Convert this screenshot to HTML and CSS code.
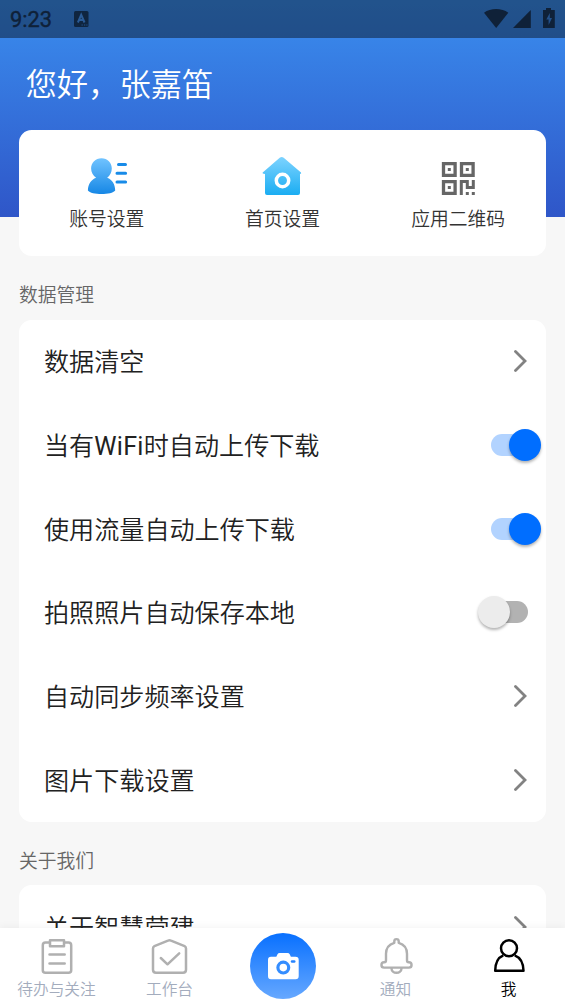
FILE: index.html
```html
<!DOCTYPE html>
<html lang="zh-CN">
<head>
<meta charset="utf-8">
<title>我</title>
<link rel="stylesheet" href="styles.css">
</head>
<body>
<div class="app">
  <header class="statusbar">
    <span class="clock">9:23</span>
    <svg class="ime" width="15" height="16" viewBox="0 0 15 16"><rect width="14.5" height="16" rx="1.5" fill="#0f2540"/><path d="M3.9 11.5 7.2 3.8 10.5 11.5M5 9h4.400" fill="none" stroke="#2a5b96" stroke-width="2"/><path d="M7.500 14h1.300M10 14h1.300M12.300 14h1.200" stroke="#23548d" stroke-width="1.200"/></svg>
    <svg class="signals" width="72" height="20" viewBox="484 8 72 20" fill="#0f2138"><path d="M484 12.700C490.500 7.800 501.800 7.800 508.300 12.700L496.200 28Z"/><path d="M513 28 530.800 10V28Z"/><path d="M546 8h5v2h3.800v18H543V10h3Z"/><path d="M549.800 13 546.300 19.500h2.300V25l3.400-7h-2.200Z" fill="#23518a"/></svg>
  </header>
  <main class="content">
    <section class="hero">
      <h1 class="greeting">您好，张嘉笛</h1>
    </section>
    <nav class="card shortcuts">
      <a class="shortcut">
        <svg width="42" height="42" viewBox="86 155 42 42"><defs><linearGradient id="person" x1="0" y1="0" x2="0" y2="1"><stop offset="0" stop-color="#70c3ff"/><stop offset="1" stop-color="#1687e5"/></linearGradient></defs><path d="M101.500 158.300c6 0 10.300 4.500 10.300 10.300 0 4-1.900 7-4.600 9.200 5.100 2 8 6.500 8 12.700-3.300 4.800-24 4.800-27.300 0 0-6.200 3.200-10.700 8.200-12.700-3-2.200-5-5.200-5-9.200 0-5.800 4.400-10.300 10.400-10.300Z" fill="url(#person)"/><path d="M118.500 164.500h7M117 173.200h8.600M117 181.900h8.600" stroke="#188be8" stroke-width="3" stroke-linecap="round"/></svg>
        <span>账号设置</span>
      </a>
      <a class="shortcut">
        <svg width="42" height="42" viewBox="262 155 42 42"><defs><linearGradient id="house" x1="0" y1="0" x2="0" y2="1"><stop offset="0" stop-color="#7dd3ff"/><stop offset="1" stop-color="#1badf2"/></linearGradient></defs><path d="M280.700 157.800q2-1.800 4 0L302 172.400q.8 1.400-1 1.500v19q0 2-2 2h-31q-2 0-2-2v-19q-3-.2-2.300-1.500Z" fill="url(#house)"/><circle cx="283.500" cy="180.500" r="6.200" fill="none" stroke="#fff" stroke-width="3.500"/></svg>
        <span>首页设置</span>
      </a>
      <a class="shortcut">
        <svg width="42" height="42" viewBox="437.200 155 42 42"><path d="M443.700 163.700h11.600v11.600h-11.600ZM461.700 163.700h11.600v11.600h-11.600ZM443.700 181.700h11.600v11.600h-11.600Z" fill="none" stroke="#666" stroke-width="3.300"/><path d="M448 168h3v3h-3ZM466 168h3v3h-3ZM448 186h3v3h-3ZM460 180h9v6h3v-6h3v9h-9v-6h-3v12h-3ZM466 192h3v3h-3ZM472 192h3v3h-3Z" fill="#666"/></svg>
        <span>应用二维码</span>
      </a>
    </nav>
    <h2 class="section-title">数据管理</h2>
    <section class="card settings">
      <div class="row"><span>数据清空</span><svg class="chevron" viewBox="0 0 13 22"><path d="M1.500 1.500 11 11 1.500 20.500"/></svg></div>
      <div class="row"><span>当有<b class="latin">WiFi</b>时自动上传下载</span><i class="switch on"></i></div>
      <div class="row"><span>使用流量自动上传下载</span><i class="switch on"></i></div>
      <div class="row"><span>拍照照片自动保存本地</span><i class="switch"></i></div>
      <div class="row"><span>自动同步频率设置</span><svg class="chevron" viewBox="0 0 13 22"><path d="M1.500 1.500 11 11 1.500 20.500"/></svg></div>
      <div class="row"><span>图片下载设置</span><svg class="chevron" viewBox="0 0 13 22"><path d="M1.500 1.500 11 11 1.500 20.500"/></svg></div>
    </section>
    <h2 class="section-title">关于我们</h2>
    <section class="card settings">
      <div class="row"><span>关于智慧营建</span><svg class="chevron" viewBox="0 0 13 22"><path d="M1.500 1.500 11 11 1.500 20.500"/></svg></div>
    </section>
  </main>
  <nav class="tabbar">
    <a class="tab">
      <svg width="38" height="38" viewBox="37.500 937 38 38" fill="none" stroke="#b0b0b0" stroke-width="2.500" stroke-linecap="round" stroke-linejoin="round"><path d="M49.500 942.500H45q-2.700 0-2.700 2.700v25q0 2.500 2.700 2.500h23q2.700 0 2.700-2.500v-25q0-2.700-2.700-2.700h-4.500M49.500 940.300h14v6h-14ZM49 954.500h15.200M49 963.500h15.200"/></svg>
      <span>待办与关注</span>
    </a>
    <a class="tab">
      <svg width="38" height="38" viewBox="151 937 38 38" fill="none" stroke="#b0b0b0" stroke-width="2.500" stroke-linecap="round" stroke-linejoin="round"><path d="M168 940.600q1.500-.8 3 0l13.600 5.500q1.400.7 1.400 2.400v21.200q0 3-3 3h-27q-3 0-3-3v-21.200q0-1.700 1.400-2.400ZM160.800 958l6.700 6.300 11.700-11"/></svg>
      <span>工作台</span>
    </a>
    <a class="tab tab-camera">
      <span class="camera"><svg width="32" height="28" viewBox="266 952 32 28"><path d="M270 956.800h5.300l1.200-2.500q.7-1.300 2.200-1.300h7.800q1.500 0 2.200 1.300l1.200 2.500h4.600q3.200 0 3.200 3.200v16q0 3.200-3.200 3.200H270q-3 0-3-3.200v-16q0-3.200 3-3.200Z" fill="#fff"/><circle cx="282.300" cy="967.600" r="5.400" fill="none" stroke="#348dff" stroke-width="3.200"/><path d="M291 961.500h2.300" stroke="#2683ff" stroke-width="2.400" stroke-linecap="round"/></svg></span>
    </a>
    <a class="tab">
      <svg width="38" height="38" viewBox="376.500 937 38 38" fill="none" stroke="#b0b0b0" stroke-width="2.400" stroke-linecap="round" stroke-linejoin="round"><path d="M393.800 942.800v-1.500a2.200 2.200 0 0 1 4.400 0v1.500q8.300 2.400 8.300 11v6.500q0 2 1.700 2h.2a2.600 2.600 0 0 1 0 5.300h-24.800a2.600 2.600 0 0 1 0-5.300h.2q1.700 0 1.700-2v-6.500q0-8.600 8.300-11ZM391 968.500a5 4.300 0 0 0 10 0"/></svg>
      <span>通知</span>
    </a>
    <a class="tab active">
      <svg width="38" height="38" viewBox="490 937 38 38" fill="none" stroke="#000" stroke-width="2.500" stroke-linejoin="round"><circle cx="509" cy="948.200" r="8"/><path d="M503.300 955.300C498 957.500 495.300 963 495.200 970.700H523.500C523.300 963 520.500 957.500 514.700 955.300"/></svg>
      <span>我</span>
    </a>
  </nav>
</div>
</body>
</html>
```
FILE: styles.css
```css
* { box-sizing: border-box; }

body {
  margin: 0;
  font-family: Roboto, "Noto Sans CJK SC", sans-serif;
  font-weight: 350;
  background: #f7f7f7;
}

.app {
  width: 565px;
  height: 1004px;
  overflow: hidden;
  display: grid;
  grid-template: 38px 890px 76px / 100%;
  background: linear-gradient(180deg, #3a8eef 0, #2f56c8 217px, #f7f7f7 217px);
}

.statusbar {
  display: flex;
  align-items: center;
  padding: 0 9px 0 10px;
  background: rgba(0, 0, 0, 0.41);
  color: #0f2138;
}

.clock {
  width: 64px;
  padding-top: 2px;
  font-size: 21.800px;
  line-height: 36px;
  font-weight: 400;
  -webkit-text-stroke: 0.4px #0f2138;
}

.signals { margin: -2px 0 0 auto; }

.content { overflow: hidden; }

.hero { height: 92px; padding: 25px 25.500px 0; }

.greeting {
  margin: 0;
  color: #fff;
  font-size: 31.300px;
  line-height: 46px;
  font-weight: 350;
}

.card {
  margin: 0 19px;
  background: #fff;
  border-radius: 12.500px;
}

.shortcuts {
  display: grid;
  grid-template-columns: repeat(3, 1fr);
  height: 126px;
  padding-top: 25px;
}

.shortcut {
  display: flex;
  flex-direction: column;
  align-items: center;
  gap: 9px;
  color: #333;
  font-size: 18.800px;
  line-height: 28px;
}

.section-title {
  height: 63.500px;
  margin: 0;
  padding: 26px 19px 0;
  color: #666;
  font-size: 18.800px;
  line-height: 28px;
  font-weight: 350;
}

.row {
  display: flex;
  align-items: center;
  justify-content: space-between;
  height: 83.700px;
  padding: 0 18.500px 0 25px;
  color: #212121;
  font-size: 25.100px;
  line-height: 36px;
}

.row span { padding-top: 4px; }

.latin { font-weight: 400; letter-spacing: 0.3px; }

.chevron {
  width: 13px;
  height: 22px;
  margin-right: 0.500px;
  fill: none;
  stroke: #828282;
  stroke-width: 2.800;
  stroke-linecap: round;
}

.switch {
  display: flex;
  align-items: center;
  width: 37px;
  height: 22px;
  border-radius: 11px;
  background: #b2b2b2;
}

.switch::before {
  content: "";
  flex: none;
  width: 32px;
  height: 32px;
  margin-left: -13px;
  border-radius: 50%;
  background: #ececec;
  box-shadow: 0 2px 3px rgba(0, 0, 0, 0.3);
}

.switch.on { background: #b2d3ff; }
.switch.on::before { margin-left: 18px; background: #006eff; }

.tabbar {
  display: grid;
  grid-template-columns: repeat(5, 1fr);
  background: #fff;
  box-shadow: 0 -1px 8px rgba(0, 0, 0, 0.05);
}

.tab {
  display: flex;
  flex-direction: column;
  align-items: center;
  gap: 2px;
  padding-top: 9px;
  color: #a3acbd;
  font-size: 15.700px;
  line-height: 26px;
}

.tab.active { color: #000; }
.tab-camera { padding-top: 5px; }

.camera {
  display: grid;
  place-items: center;
  width: 66px;
  height: 66px;
  border-radius: 50%;
  background: linear-gradient(#0870ff, #66a8ff);
}
```
